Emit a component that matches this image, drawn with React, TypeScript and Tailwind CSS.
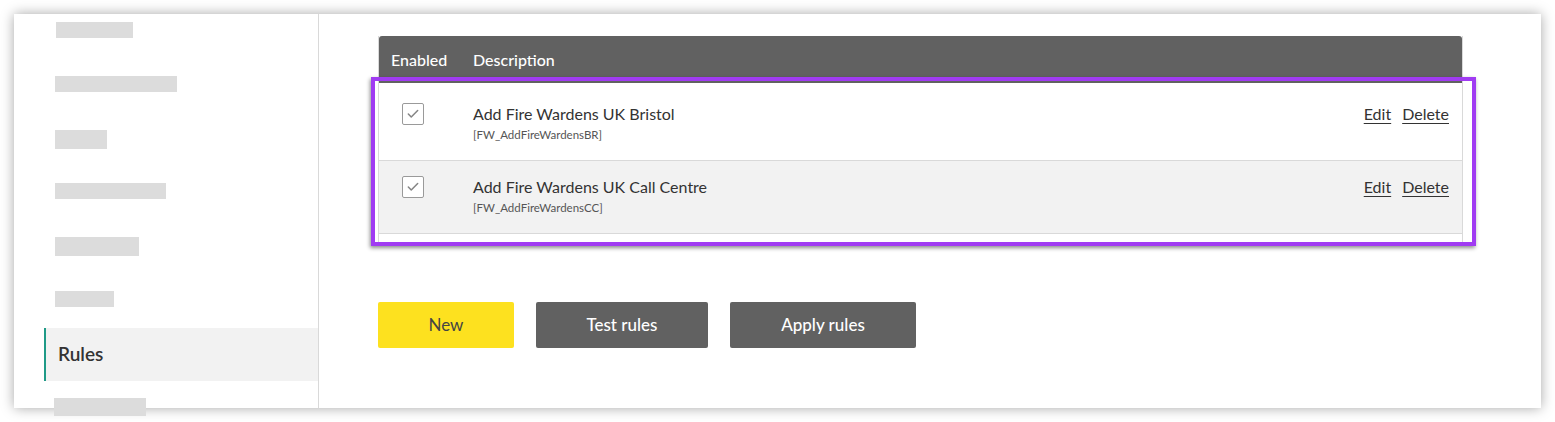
import { Check } from 'lucide-react';

const bars = [
  { w: 'w-[77px]', h: 'h-[16px]', mt: 'mt-[8px]', ml: 'ml-[42px]' },
  { w: 'w-[122px]', h: 'h-[16px]', mt: 'mt-[38px]', ml: 'ml-[41px]' },
  { w: 'w-[52px]', h: 'h-[19px]', mt: 'mt-[38px]', ml: 'ml-[41px]' },
  { w: 'w-[111px]', h: 'h-[16px]', mt: 'mt-[34px]', ml: 'ml-[41px]' },
  { w: 'w-[84px]', h: 'h-[19px]', mt: 'mt-[38px]', ml: 'ml-[41px]' },
  { w: 'w-[59px]', h: 'h-[16px]', mt: 'mt-[35px]', ml: 'ml-[41px]' },
];

const rules = [
  { title: 'Add Fire Wardens UK Bristol', code: '[FW_AddFireWardensBR]', bg: 'bg-white' },
  { title: 'Add Fire Wardens UK Call Centre', code: '[FW_AddFireWardensCC]', bg: 'bg-[#f2f2f2]' },
];

const Sidebar = () => (
  <aside className="w-[305px] shrink-0 border-r border-[#d9d9d9] flex flex-col">
    {bars.map((b, i) => (
      <div key={i} className={`${b.w} ${b.h} ${b.mt} ${b.ml} shrink-0 bg-[#dcdcdc]`} />
    ))}
    <div className="mt-[21px] ml-[30px] h-[53px] shrink-0 flex items-center bg-[#f2f2f2] border-l-2 border-[#1f9a87] pl-[12px]">
      <span className="text-[19px] font-semibold text-[#333]">Rules</span>
    </div>
    <div className="mt-[17px] ml-[40px] w-[92px] h-[18px] shrink-0 bg-[#dcdcdc]" />
  </aside>
);

const RuleRow = ({ title, code, bg }: { title: string; code: string; bg: string }) => (
  <div className={`flex h-[73px] pt-[15px] ${bg} border-b border-[#d9d9d9]`}>
    <div className="w-[94px] pl-[23px]">
      <div className="w-[22px] h-[22px] border border-[#9a9a9a] rounded-[2px] bg-white flex items-center justify-center">
        <Check size={14} strokeWidth={2.6} className="text-[#858585]" />
      </div>
    </div>
    <div className="flex-1">
      <div className="text-[16px] leading-[21px] text-[#333]">{title}</div>
      <div className="text-[11.5px] leading-[14px] mt-[4px] text-[#555]">{code}</div>
    </div>
    <div className="flex gap-[11px] pr-[13px] text-[16px] leading-[21px] text-[#333]">
      <a className="underline underline-offset-[3px]">Edit</a>
      <a className="underline underline-offset-[3px]">Delete</a>
    </div>
  </div>
);

export default function App() {
  return (
    <div className="w-full h-[422px] bg-white p-[14px] font-['Lato',sans-serif]">
      <div className="h-[394px] bg-white flex shadow-[0_0_12px_rgba(0,0,0,0.35)]">
        <Sidebar />
        <main className="flex-1 pl-[59px] pr-[78px] pt-[22px]">
          <div className="relative">
            <div className="border-x border-[#d9d9d9]">
              <div className="h-[47px] bg-[#616161] rounded-t-[3px] flex items-center text-white text-[16px] font-medium">
                <span className="w-[94px] pl-[12px]">Enabled</span>
                <span>Description</span>
              </div>
              <div className="h-[5px] bg-white" />
              {rules.map((r) => (
                <RuleRow key={r.code} {...r} />
              ))}
              <div className="h-[9px] bg-white" />
            </div>
            <div className="absolute left-[-7px] top-[41px] w-[1105px] h-[169px] border-4 border-[#a03bf2] shadow-[-1px_2px_4px_rgba(0,0,0,0.45)] pointer-events-none" />
          </div>
          <div className="flex gap-[22px] mt-[59px]">
            <button className="w-[136px] h-[46px] rounded-[2px] bg-[#fde11f] text-[#444] text-[17px]">New</button>
            <button className="w-[172px] h-[46px] rounded-[2px] bg-[#616161] text-white text-[17px] font-medium">Test rules</button>
            <button className="w-[186px] h-[46px] rounded-[2px] bg-[#616161] text-white text-[17px] font-medium">Apply rules</button>
          </div>
        </main>
      </div>
    </div>
  );
}
